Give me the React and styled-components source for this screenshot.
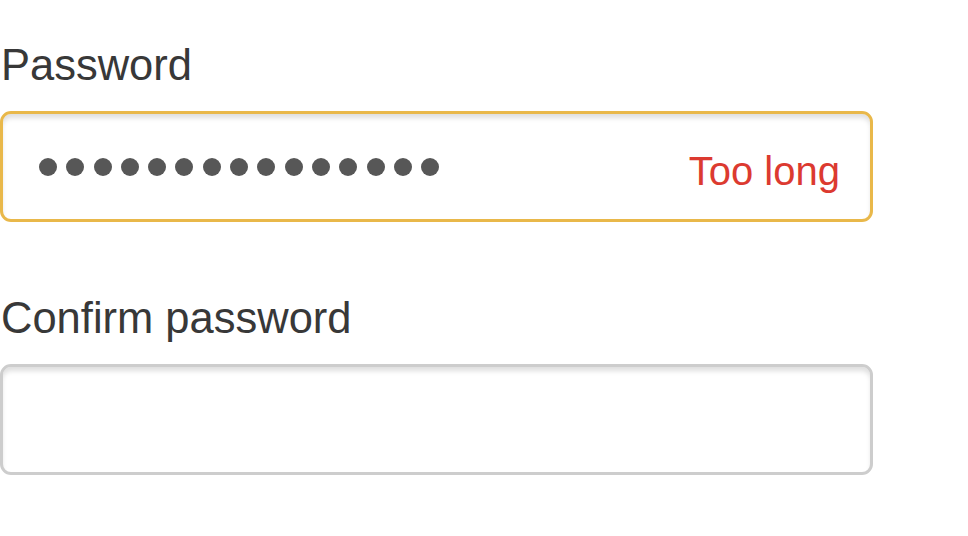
import React from 'react'
import styled, { createGlobalStyle } from 'styled-components'

const GlobalStyle = createGlobalStyle`
  html, body {
    margin: 0;
    padding: 0;
    background: #ffffff;
  }
  body {
    font-family: "Liberation Sans", Arial, Helvetica, sans-serif;
    color: #333333;
  }
`

const Form = styled.div`
  width: 873px;
  padding-top: 40px;
  display: flex;
  flex-direction: column;
`

const Field = styled.div`
  display: flex;
  flex-direction: column;
  gap: 21px;
  margin-bottom: 71px;
`

const Label = styled.div`
  font-size: 43.5px;
  line-height: 50px;
  color: #383838;
  padding-left: 1px;
`

const Box = styled.div`
  box-sizing: border-box;
  height: 111px;
  border: 3px solid ${props => props.invalid ? '#e9b84a' : '#cdcdcd'};
  border-radius: 11px;
  box-shadow: inset 0 5px 5px -1px rgba(0, 0, 0, 0.13);
  background: #fff;
  display: flex;
  align-items: center;
  justify-content: space-between;
  padding: 0 30px 0 36px;
`

const Dots = styled.div`
  display: flex;
  gap: 9.3px;
  margin-top: 1px;
`

const Dot = styled.span`
  width: 18px;
  height: 18px;
  border-radius: 50%;
  background: #575757;
`

const Error = styled.span`
  font-size: 40px;
  color: #dc3a30;
  margin-top: 10px;
`

export default function App() {
  const dots = Array.from({ length: 15 }, (_, i) => i)
  return (
    <>
      <GlobalStyle />
      <Form>
        <Field>
          <Label>Password</Label>
          <Box invalid>
            <Dots>
              {dots.map(i => <Dot key={i} />)}
            </Dots>
            <Error>Too long</Error>
          </Box>
        </Field>
        <Field>
          <Label>Confirm password</Label>
          <Box />
        </Field>
      </Form>
    </>
  )
}
